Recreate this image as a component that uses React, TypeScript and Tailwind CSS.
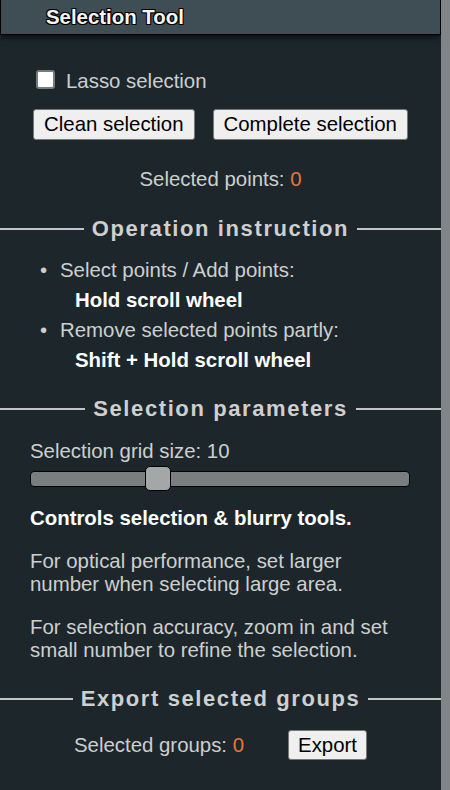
import { useState } from 'react';

function SectionTitle({ title }: { title: string }) {
  return (
    <div className="flex items-center h-[30px]">
      <div className="flex-1 h-[2px] bg-[#c4c4c4]" />
      <span className="mx-[8px] text-[22px] font-bold tracking-[1.6px] leading-[30px] text-[#cfcfcf]">{title}</span>
      <div className="flex-1 h-[2px] bg-[#c4c4c4]" />
    </div>
  );
}

export default function App() {
  const [lasso, setLasso] = useState(false);
  const [gridSize] = useState(10);
  const selectedPoints = 0;
  const selectedGroups = 0;

  const btn =
    'h-[31px] px-[10px] bg-[#efefef] border border-[#767676] rounded-[3px] text-black text-[20.4px] leading-[23px]';

  return (
    <div className="flex w-[450px] h-[790px] overflow-hidden font-['Liberation_Sans',Arial,sans-serif]">
      <div className="w-[441px] bg-[#1d272b] text-[20.4px] text-[#cdcfcf]">
        {/* header */}
        <div className="h-[35px] bg-[#3e4e54] border-x border-b border-black shadow-[0_3px_6px_rgba(0,0,0,0.6)]">
          <h1 className="pl-[45px] text-[20.4px] font-bold leading-[34px] text-[#f4f4f4] [text-shadow:1px_1px_0_#000,-1px_-1px_0_#000,1px_-1px_0_#000,-1px_1px_0_#000]">
            Selection Tool
          </h1>
        </div>

        {/* lasso */}
        <label className="mt-[34px] h-[24px] flex items-center pl-[36px] cursor-pointer">
          <span
            onClick={() => setLasso(!lasso)}
            className={`w-[19px] h-[19px] -mt-[3px] rounded-[3px] border-2 border-[#7a7a7a] ${lasso ? 'bg-[#3b82f6]' : 'bg-white'}`}
          />
          <span className="ml-[11px] leading-[23px]">Lasso selection</span>
        </label>

        <div className="mt-[16px] flex justify-center gap-[18px]">
          <button className={btn}>Clean selection</button>
          <button className={btn}>Complete selection</button>
        </div>

        <p className="mt-[28px] text-center leading-[23px]">
          Selected points: <span className="text-[#e8733d]">{selectedPoints}</span>
        </p>

        {/* operation instruction */}
        <div className="mt-[23px]">
          <SectionTitle title="Operation instruction" />
        </div>
        <ul className="mt-[11px] leading-[30px]">
          <li className="flex pl-[40px]">
            <span className="w-[20px]">•</span>
            <div>
              <div>Select points / Add points:</div>
              <div className="pl-[15px] font-bold text-white">Hold scroll wheel</div>
            </div>
          </li>
          <li className="flex pl-[40px]">
            <span className="w-[20px]">•</span>
            <div>
              <div>Remove selected points partly:</div>
              <div className="pl-[15px] font-bold text-white">Shift + Hold scroll wheel</div>
            </div>
          </li>
        </ul>

        {/* selection parameters */}
        <div className="mt-[19px]">
          <SectionTitle title="Selection parameters" />
        </div>
        <div className="px-[30px]">
          <p className="mt-[16px] leading-[23px]">Selection grid size: {gridSize}</p>
          <div className="mt-[3px] relative h-[25px] flex items-center">
            <div className="w-[380px] h-[16px] bg-[#7a7e81] border border-black rounded-[4px]" />
            <div className="absolute left-[115px] top-0 w-[26px] h-[25px] bg-[#a3a7a8] border border-black rounded-[5px]" />
          </div>
          <p className="mt-[16px] leading-[23px] font-bold text-white">Controls selection &amp; blurry tools.</p>
          <p className="mt-[20px] leading-[23px]">
            For optical performance, set larger
            <br />
            number when selecting large area.
          </p>
          <p className="mt-[20px] leading-[23px]">
            For selection accuracy, zoom in and set
            <br />
            small number to refine the selection.
          </p>
        </div>

        {/* export */}
        <div className="mt-[22px]">
          <SectionTitle title="Export selected groups" />
        </div>
        <div className="mt-[16px] flex justify-center items-center gap-[44px]">
          <span className="leading-[23px]">
            Selected groups: <span className="text-[#e8733d]">{selectedGroups}</span>
          </span>
          <button className="h-[30px] px-[9px] bg-[#efefef] border border-[#767676] rounded-[3px] text-black text-[20.4px] leading-[23px]">
            Export
          </button>
        </div>
      </div>
      <div className="w-[9px] bg-[#818588]" />
    </div>
  );
}
